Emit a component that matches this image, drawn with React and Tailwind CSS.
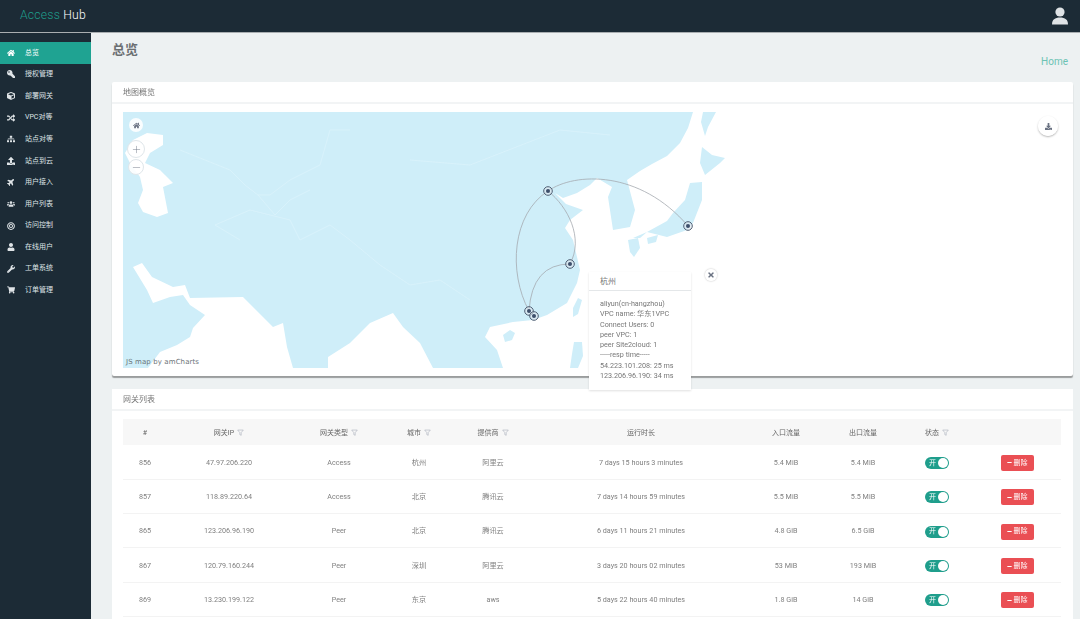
import React from "react";
import {
    FaHome,
    FaKey,
    FaCube,
    FaRandom,
    FaSitemap,
    FaUpload,
    FaPlane,
    FaUsers,
    FaBullseye,
    FaUser,
    FaWrench,
    FaShoppingCart,
    FaMinus,
    FaTimes,
    FaDownload,
} from "react-icons/fa";
import { Plus, Minus } from "lucide-react";

const menu = [
    { label: "总览", icon: FaHome, active: true },
    { label: "授权管理", icon: FaKey, iconClass: "-scale-x-100" },
    { label: "部署网关", icon: FaCube },
    { label: "VPC对等", icon: FaRandom },
    { label: "站点对等", icon: FaSitemap },
    { label: "站点到云", icon: FaUpload },
    { label: "用户接入", icon: FaPlane, iconClass: "-rotate-45" },
    { label: "用户列表", icon: FaUsers },
    { label: "访问控制", icon: FaBullseye },
    { label: "在线用户", icon: FaUser },
    { label: "工单系统", icon: FaWrench },
    { label: "订单管理", icon: FaShoppingCart },
];

const rows = [
    ["856", "47.97.206.220", "Access", "杭州", "阿里云", "7 days 15 hours 3 minutes", "5.4 MiB", "5.4 MiB"],
    ["857", "118.89.220.64", "Access", "北京", "腾讯云", "7 days 14 hours 59 minutes", "5.5 MiB", "5.5 MiB"],
    ["865", "123.206.96.190", "Peer", "北京", "腾讯云", "6 days 11 hours 21 minutes", "4.8 GiB", "6.5 GiB"],
    ["867", "120.79.160.244", "Peer", "深圳", "阿里云", "3 days 20 hours 02 minutes", "53 MiB", "193 MiB"],
    ["869", "13.230.199.122", "Peer", "东京", "aws", "5 days 22 hours 40 minutes", "1.8 GiB", "14 GiB"],
];

const columns = [
    { title: "#", width: "w-[44px]" },
    { title: "网关IP", width: "w-[124px]", filter: true },
    { title: "网关类型", width: "w-[96px]", filter: true },
    { title: "城市", width: "w-[64px]", filter: true },
    { title: "提供商", width: "w-[84px]", filter: true },
    { title: "运行时长", width: "w-[212px]" },
    { title: "入口流量", width: "w-[78px]" },
    { title: "出口流量", width: "w-[76px]" },
    { title: "状态", width: "w-[72px]", filter: true },
    { title: "", width: "w-[88px]" },
];

const nodes = [
    [548, 191],
    [688, 226],
    [570, 264],
    [529, 311],
    [534, 316],
];

const FilterIcon = () => (
    <svg viewBox="0 0 10 10" className="ml-[3px] inline-block h-[7px] w-[7px] text-gray-400">
        <path d="M1 1.5h8L6 5.2V9L4 8V5.2z" fill="none" stroke="currentColor" strokeWidth="0.7" />
    </svg>
);

const MapDrawing = () => (
    <svg viewBox="123 112 939 256" className="block h-[256px] w-[939px]">
        {/* land, seas are cut out on top of it */}
        <path
            fill="#cfeef9"
            d="M123 112H693L688 128L680 143L667 156L652 164L640 171L627 180L635 210L630 227L613 230L608 197L612 187L597 178L590 185L577 193L563 198L555 193L566 204L583 210L570 220L565 228L573 240L577 257L580 270L577 283L567 303L547 315L533 320L513 322L490 327L485 337L497 350L503 368H123Z"
        />
        <path
            fill="#fff"
            d="M133 267L142 263L152 277L173 287L185 285L190 298L243 297L263 317L273 327L283 323L287 347L293 368H148L160 352L177 345L190 337L193 328L205 315L190 305L183 295L170 297L153 303L147 290Z"
        />
        <path fill="#fff" d="M328 368V357L350 343L370 323L393 313L403 327L420 343L433 368Z" />
        <path
            fill="#fff"
            d="M133 140L147 133L163 135L163 145L150 153L145 163L160 170L165 175L173 183L163 187L168 213L157 217L143 212L138 203L143 190L140 177L130 163L125 153Z"
        />
        {/* islands */}
        <path fill="#cfeef9" d="M503 335L510 330L515 333L512 340L505 342Z" />
        <path fill="#cfeef9" d="M578 298L582 300L578 314L573 317L573 308Z" />
        <path fill="#cfeef9" d="M574 342L582 342L583 356L578 368H570L572 354Z" />
        <path fill="#cfeef9" d="M628 240L638 238L640 248L634 257L630 252Z" />
        <path fill="#cfeef9" d="M647 238L658 235L656 242L648 244Z" />
        <path fill="#cfeef9" d="M633 238L647 232L667 221L673 213L685 200L690 183L702 182L702 200L693 223L687 230L667 237L647 232L640 238Z" />
        <path fill="#cfeef9" d="M702 147L712 155L725 158L720 163L705 175L700 163Z" />
        <path fill="#cfeef9" d="M703 112H716L708 127L705 136L701 122Z" />
        {/* borders */}
        <g fill="none" stroke="#daf3fb" strokeWidth="0.8">
            <path d="M180 150L205 160L230 170L245 185L258 195L270 195L290 180L320 165L330 130L350 130" />
            <path d="M240 240L215 225L250 210L270 215L290 220L300 240L330 225L350 240L380 265L410 285L440 280L470 300" />
            <path d="M258 195L275 215L290 200L310 190" />
            <path d="M410 160L470 165L560 130L610 135" />
        </g>
        {/* links */}
        <g fill="none" stroke="#a4aab0" strokeWidth="0.8">
            <path d="M548 191C575 172 640 170 688 226" />
            <path d="M548 191C568 207 584 238 570 264" />
            <path d="M548 191C512 214 508 272 529 311" />
            <path d="M570 264Q532 264 529 311" />
        </g>
        {nodes.map(([x, y]) => (
            <g key={`${x}-${y}`}>
                <circle cx={x} cy={y} r="4.3" fill="#dfe8ee" fillOpacity="0.6" stroke="#4f5f74" strokeWidth="1" />
                <circle cx={x} cy={y} r="2" fill="#3d4f6b" />
            </g>
        ))}
    </svg>
);

const RoundButton = ({ className, children }) => (
    <div
        className={`absolute flex items-center justify-center rounded-full bg-white/90 text-gray-500 ${className}`}
    >
        {children}
    </div>
);

const App = () => {
    return (
        <div className="flex h-[619px] flex-col overflow-hidden bg-[#edf1f2] font-['Roboto','Noto_Sans_CJK_SC',sans-serif] text-[#777]">
            <header className="flex h-[33px] shrink-0 items-center justify-between border-b border-[#a9aeb1] bg-[#1c2b36] pl-[20px] pr-[11px]">
                <div className="pb-[2px] text-[12.2px] font-light tracking-[0.2px]">
                    <span className="text-[#1f9e8c]">Access</span> <span className="text-white">Hub</span>
                </div>
                <svg viewBox="0 0 18 18" className="h-[18px] w-[18px] text-[#dfe3e6]">
                    <circle cx="9" cy="5" r="4.6" fill="currentColor" />
                    <path d="M1 17.5C1 12.5 4 10.5 9 10.5S17 12.5 17 17.5Z" fill="currentColor" />
                </svg>
            </header>

            <div className="flex min-h-0 flex-1">
                <aside className="w-[91px] shrink-0 bg-[#1c2b36] pt-[9px]">
                    {menu.map((item) => {
                        const Icon = item.icon;
                        return (
                            <div
                                key={item.label}
                                className={`flex h-[21.6px] items-center pl-[7px] text-[7px] text-[#dfe4e7] ${
                                    item.active ? "bg-[#1fa392] text-white" : ""
                                }`}
                            >
                                <span className="flex w-[18px] shrink-0">
                                    <Icon className={`h-[8px] w-[8px] ${item.iconClass || ""}`} />
                                </span>
                                {item.label}
                            </div>
                        );
                    })}
                </aside>

                <main className="min-w-0 flex-1 pl-[21px] pr-[7px]">
                    <div className="flex h-[49px] justify-between">
                        <h1 className="pt-[8px] text-[13px] font-bold leading-[18px] text-[#6b6f72]">总览</h1>
                        <span className="pr-[5px] pt-[22px] text-[10px] leading-[14px] text-[#6cc3b4]">Home</span>
                    </div>

                    <section className="rounded-[2px] bg-white pb-[8px] shadow-[0_2px_1px_rgba(0,0,0,0.35)]">
                        <h2 className="flex h-[22px] items-center border-b-2 border-[#f2f4f5] px-[11px] pt-[2px] text-[8px] font-normal">
                            <span className="will-change-transform">地图概览</span>
                        </h2>
                        <div className="relative mx-[11px] mt-[8px] h-[256px]">
                            <MapDrawing />
                            <RoundButton className="left-[6px] top-[6px] h-[14px] w-[14px]">
                                <FaHome className="h-[7px] w-[7px]" />
                            </RoundButton>
                            <RoundButton className="left-[4px] top-[28px] h-[18px] w-[18px] border border-[#dfe6ea] text-gray-400">
                                <Plus className="h-[11px] w-[11px]" strokeWidth={1} />
                            </RoundButton>
                            <RoundButton className="left-[5px] top-[47px] h-[16px] w-[16px] border border-[#dfe6ea] text-gray-400">
                                <Minus className="h-[11px] w-[11px]" strokeWidth={1} />
                            </RoundButton>
                            <RoundButton className="left-[915px] top-[4px] h-[20px] w-[20px] shadow-[0_1px_2px_rgba(0,0,0,0.3)]">
                                <FaDownload className="h-[7px] w-[7px]" />
                            </RoundButton>
                            <span className="absolute bottom-[1px] left-[3px] font-['DejaVu_Sans',sans-serif] text-[7px] tracking-[0.1px] text-[#6b7378]">
                                JS map by amCharts
                            </span>
                            <div className="absolute left-[466px] top-[160px] z-10 h-[118px] w-[102px] bg-white shadow-[0_1px_2px_rgba(0,0,0,0.12)]">
                                <div className="flex h-[19px] items-center border-b border-[#e4e7e9] px-[11px] pt-[1px] text-[8px]">杭州</div>
                                <div className="px-[11px] pt-[8px] text-[7.2px] leading-[10.3px] will-change-transform">
                                    <div>aliyun(cn-hangzhou)</div>
                                    <div>VPC name: 华东1VPC</div>
                                    <div>Connect Users: 0</div>
                                    <div>peer VPC: 1</div>
                                    <div>peer Site2cloud: 1</div>
                                    <div>-----resp time-----</div>
                                    <div>54.223.101.208: 25 ms</div>
                                    <div>123.206.96.190: 34 ms</div>
                                </div>
                            </div>
                            <RoundButton className="left-[582px] top-[157px] h-[12px] w-[12px] bg-white text-[#555] shadow-[0_0_2px_rgba(0,0,0,0.3)]">
                                <FaTimes className="h-[8px] w-[8px]" />
                            </RoundButton>
                        </div>
                    </section>

                    <section className="mt-[13px] bg-white px-[11px] pb-[8px]">
                        <h2 className="-mx-[11px] flex h-[22px] items-center border-b-2 border-[#f2f4f5] px-[11px] pt-[2px] text-[8px] font-normal">
                            <span className="will-change-transform">网关列表</span>
                        </h2>
                        <table className="mt-[8px] w-[938px] table-fixed text-center text-[7.2px] will-change-transform">
                            <colgroup>
                                {columns.map((col, i) => (
                                    <col key={i} className={col.width} />
                                ))}
                            </colgroup>
                            <thead>
                                <tr className="h-[26px] bg-[#f7f7f7] text-[#666]">
                                    {columns.map((col, i) => (
                                        <th key={i} className="pt-[2px] text-[7px] font-normal">
                                            {col.title}
                                            {col.filter && <FilterIcon />}
                                        </th>
                                    ))}
                                </tr>
                            </thead>
                            <tbody>
                                {rows.map((row) => (
                                    <tr key={row[0]} className="h-[34.3px] border-b border-[#f3f3f3] text-[#808080]">
                                        {row.map((cell, i) => (
                                            <td key={i} className="pt-[2px]">
                                                {cell}
                                            </td>
                                        ))}
                                        <td className="pt-[2px]">
                                            <span className="inline-flex h-[12px] w-[24px] items-center justify-between rounded-full bg-[#1f9e8c] pl-[4px] pr-[1px] align-middle text-[7px] text-white">
                                                开
                                                <span className="h-[10px] w-[10px] rounded-full bg-white" />
                                            </span>
                                        </td>
                                        <td className="pt-[2px]">
                                            <button className="inline-flex h-[16px] w-[33px] items-center justify-center gap-[2px] rounded-[2px] bg-[#ea4f54] align-middle text-[7px] text-white">
                                                <FaMinus className="h-[5px] w-[5px]" />
                                                删除
                                            </button>
                                        </td>
                                    </tr>
                                ))}
                            </tbody>
                        </table>
                    </section>
                </main>
            </div>
        </div>
    );
};

export default App;
